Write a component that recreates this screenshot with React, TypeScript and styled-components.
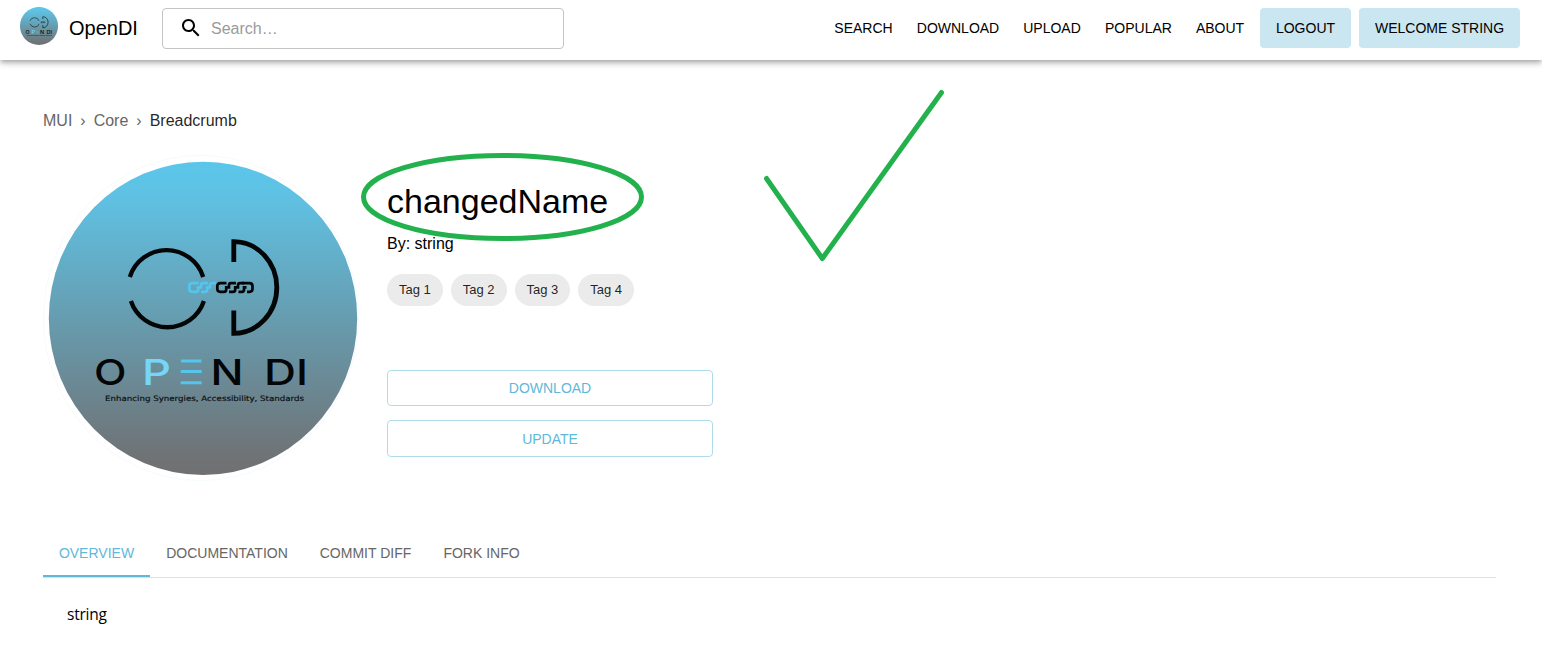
import React from "react";
import styled, { createGlobalStyle, css } from "styled-components";

const sans = '"Liberation Sans", Arial, sans-serif';

const GlobalStyle = createGlobalStyle`
  *, *::before, *::after { box-sizing: border-box; }
  body { margin: 0; background: #fff; color: #000; font-family: ${sans}; font-size: 16px; overflow: hidden; }
  button { font: inherit; }
`;

const Page = styled.div`
  position: relative;
  width: 1542px;
  height: 659px;
  overflow: hidden;
`;

const AppBar = styled.header`
  display: flex;
  align-items: flex-start;
  height: 60px;
  padding: 8px 22px 0 20px;
  background: #fff;
  box-shadow: 0 2px 4px -1px rgba(0, 0, 0, 0.2), 0 4px 5px rgba(0, 0, 0, 0.14), 0 1px 10px rgba(0, 0, 0, 0.12);
`;

const Brand = styled.a`
  display: flex;
  align-items: center;
  gap: 11px;
  width: 142px;
  height: 40px;
  font-size: 20px;
`;

const BrandLogo = styled.span`
  display: flex;
  width: 38px;
  height: 38px;
  margin-top: -4px;
`;

const SearchBox = styled.label`
  display: flex;
  align-items: center;
  width: 402px;
  height: 41px;
  padding: 0 0 1px 16px;
  gap: 8px;
  border: 1px solid #c4c4c4;
  border-radius: 4px;
`;

const SearchInput = styled.input`
  flex: 1;
  min-width: 0;
  padding: 2px 0 0;
  border: 0;
  outline: 0;
  background: none;
  font: 16px ${sans};
  &::placeholder { color: #9b9b9b; opacity: 1; }
`;

const Nav = styled.nav`
  display: flex;
  gap: 8px;
  margin-left: auto;
`;

const NavButton = styled.button<{ $filled?: boolean; $w: number }>`
  width: ${(p) => p.$w}px;
  height: 40px;
  padding: 0;
  border: 0;
  border-radius: 4px;
  background: ${(p) => (p.$filled ? "#cae6f1" : "transparent")};
  color: #000;
  font-size: 14px;
  white-space: nowrap;
`;

const Main = styled.main`
  padding: 51px 46px 0 43px;
`;

const Crumbs = styled.ol`
  display: flex;
  margin: 0;
  padding: 0;
  list-style: none;
  line-height: 20px;
  color: #666;
`;

const Crumb = styled.li<{ $current?: boolean }>`
  ${(p) => p.$current && css`color: rgba(0, 0, 0, 0.87);`}
  &:not(:first-child)::before { content: "›"; margin: 0 8px; color: #666; }
`;

const Hero = styled.section`
  display: flex;
  height: 343px;
  padding-top: 24px;
`;

const Cover = styled.div`
  display: flex;
  width: 316px;
  height: 326px;
  margin-right: 28px;
`;

const Info = styled.div`
  display: flex;
  flex-direction: column;
  width: 326px;
`;

const Title = styled.h1`
  margin: 25px 0 0;
  font-size: 34px;
  font-weight: 400;
  line-height: 42px;
`;

const Author = styled.p`
  margin: 12px 0 0;
  line-height: 20px;
`;

const Tags = styled.div`
  display: flex;
  gap: 8px;
  margin-top: 20px;
`;

const Tag = styled.span`
  width: 55.78px;
  border-radius: 16px;
  background: #ebebeb;
  color: rgba(0, 0, 0, 0.87);
  font-size: 13px;
  line-height: 32px;
  text-align: center;
`;

const Actions = styled.div`
  display: flex;
  flex-direction: column;
  gap: 14px;
  margin-top: 64px;
`;

const ActionButton = styled.button<{ $h: number }>`
  height: ${(p) => p.$h}px;
  padding: ${(p) => p.$h - 36}px 0 0;
  border: 1px solid #afdcea;
  border-radius: 4px;
  background: #fff;
  color: #60b9d9;
  font-size: 14px;
`;

const TabList = styled.div`
  display: flex;
  height: 49px;
  margin-top: 55px;
  border-bottom: 1px solid #dfdfdf;
`;

const Tab = styled.button<{ $active?: boolean; $w: number }>`
  width: ${(p) => p.$w}px;
  height: 48px;
  padding: 2px 0 0;
  border: 0;
  border-bottom: 2px solid ${(p) => (p.$active ? "#60b9d9" : "transparent")};
  background: none;
  color: ${(p) => (p.$active ? "#60b9d9" : "#666")};
  font-size: 14px;
  white-space: nowrap;
`;

const TabPanel = styled.div`
  padding: 24px;
  font: 15.5px/24px "Open Sans", "Noto Sans", sans-serif;
  letter-spacing: -0.25px;
`;

const Markup = styled.svg`
  position: absolute;
  inset: 0;
  pointer-events: none;
`;

const LogoSvg = styled.svg`
  display: block;
  width: 100%;
  height: 100%;
`;

const Chain = ({ x, color, closed }: { x: number; color: string; closed?: boolean }) => (
  <g transform={`translate(${x} 281.8)`} stroke={color} strokeWidth="2.7" fill="none">
    <path d="M10.5 1.3H4.3Q1.3 1.3 1.3 4.3V7Q1.3 10 4.3 10H8Q10.2 10 10.2 8V5.6H13V3.3Q13 1.3 15 1.3H20" />
    <path d="M13 10H17Q19.2 10 19.2 8V5.6H22V3.3Q22 1.3 24 1.3H28" />
    {closed && <path d="M22.5 10H26Q28 10 28 8V5.6H30.5M26 1.3H33.5Q36.5 1.3 36.5 4.3V7Q36.5 10 33.5 10H31" />}
  </g>
);

function Logo({ id, ring }: { id: string; ring?: boolean }) {
  return (
    <LogoSvg viewBox={ring ? "43 155 316 326" : "49 162 308 313"} preserveAspectRatio="none">
      <defs>
        <linearGradient id={id} x1="0" y1="0" x2="0" y2="1">
          <stop offset="0" stopColor="#5bc6ea" />
          <stop offset="0.1" stopColor="#5fc2e4" />
          <stop offset="0.94" stopColor="#6f7376" />
          <stop offset="1" stopColor="#707070" />
        </linearGradient>
      </defs>
      {ring && <ellipse cx="201" cy="318" rx="157.5" ry="162.5" fill="none" stroke="#f0f8fb" strokeWidth="0.7" />}
      <ellipse cx="203" cy="318.3" rx="154.2" ry="156.6" fill={`url(#${id})`} />
      <g fill="none" stroke="#030506" strokeWidth="4.3">
        <path d="M129.8 277A38.5 38.5 0 0 1 203.2 277" />
        <path d="M130.9 301A38.5 38.5 0 0 0 203.9 301" />
        <path d="M233.8 262V241.7A43 45.8 0 0 1 233.8 333.3V310.5" strokeWidth="4.8" />
      </g>
      <Chain x={188} color="#55c5ed" />
      <Chain x={216} color="#030506" closed />
      <g fontFamily="Inter, sans-serif" fontSize="35.5" fontWeight="500" fill="#030506">
        <text x="94" y="384.5" textLength="32.5" lengthAdjust="spacingAndGlyphs">O</text>
        <text x="142" y="384.5" textLength="29" lengthAdjust="spacingAndGlyphs" fill="#75d6f8">P</text>
        <text x="210.5" y="384.5" textLength="33" lengthAdjust="spacingAndGlyphs">N</text>
        <text x="264" y="384.5" textLength="44" lengthAdjust="spacingAndGlyphs">DI</text>
      </g>
      <path d="M181 361H201.5M180.7 371.5H201.7M180.7 382.7H201.7" stroke="#55c5ed" strokeWidth="3" />
      <text x="105" y="401.3" fontFamily='"DejaVu Sans", sans-serif' fontSize="7.5" fill="#0a0c0d" stroke="#0a0c0d" strokeWidth="0.15" textLength="199" lengthAdjust="spacingAndGlyphs">
        Enhancing Synergies, Accessibility, Standards
      </text>
    </LogoSvg>
  );
}

const navItems = [
  { label: "SEARCH", w: 75 },
  { label: "DOWNLOAD", w: 98 },
  { label: "UPLOAD", w: 74 },
  { label: "POPULAR", w: 83 },
  { label: "ABOUT", w: 64 },
  { label: "LOGOUT", w: 91, filled: true },
  { label: "WELCOME STRING", w: 161, filled: true },
];

const tabs = [
  { label: "OVERVIEW", w: 107 },
  { label: "DOCUMENTATION", w: 154 },
  { label: "COMMIT DIFF", w: 123 },
  { label: "FORK INFO", w: 109 },
];

export default function App() {
  return (
    <Page>
      <GlobalStyle />
      <AppBar>
        <Brand>
          <BrandLogo><Logo id="brand" /></BrandLogo>
          OpenDI
        </Brand>
        <SearchBox>
          <svg width="24" height="24" viewBox="0 0 24 24">
            <path d="M15.5 14h-.79l-.28-.27C15.41 12.59 16 11.11 16 9.5 16 5.91 13.09 3 9.5 3S3 5.91 3 9.5 5.91 16 9.5 16c1.61 0 3.09-.59 4.23-1.57l.27.28v.79l5 4.99L20.49 19l-4.99-5zm-6 0C7.01 14 5 11.99 5 9.5S7.01 5 9.5 5 14 7.01 14 9.5 11.99 14 9.5 14z" />
          </svg>
          <SearchInput placeholder="Search…" />
        </SearchBox>
        <Nav>
          {navItems.map((n) => (
            <NavButton key={n.label} $w={n.w} $filled={n.filled}>{n.label}</NavButton>
          ))}
        </Nav>
      </AppBar>
      <Main>
        <Crumbs>
          <Crumb>MUI</Crumb>
          <Crumb>Core</Crumb>
          <Crumb $current>Breadcrumb</Crumb>
        </Crumbs>
        <Hero>
          <Cover><Logo id="cover" ring /></Cover>
          <Info>
            <Title>changedName</Title>
            <Author>By: string</Author>
            <Tags>
              {[1, 2, 3, 4].map((n) => <Tag key={n}>{`Tag ${n}`}</Tag>)}
            </Tags>
            <Actions>
              <ActionButton $h={36}>DOWNLOAD</ActionButton>
              <ActionButton $h={37}>UPDATE</ActionButton>
            </Actions>
          </Info>
        </Hero>
        <TabList>
          {tabs.map((t, i) => (
            <Tab key={t.label} $w={t.w} $active={i === 0}>{t.label}</Tab>
          ))}
        </TabList>
        <TabPanel>string</TabPanel>
      </Main>
      <Markup width="1542" height="659" fill="none" stroke="#22b14c" strokeWidth="5">
        <ellipse cx="502.5" cy="197" rx="139" ry="41.5" />
        <path d="M766.5 178.5L822.3 258.5L941.5 92.5" strokeLinecap="round" strokeLinejoin="round" />
      </Markup>
    </Page>
  );
}
